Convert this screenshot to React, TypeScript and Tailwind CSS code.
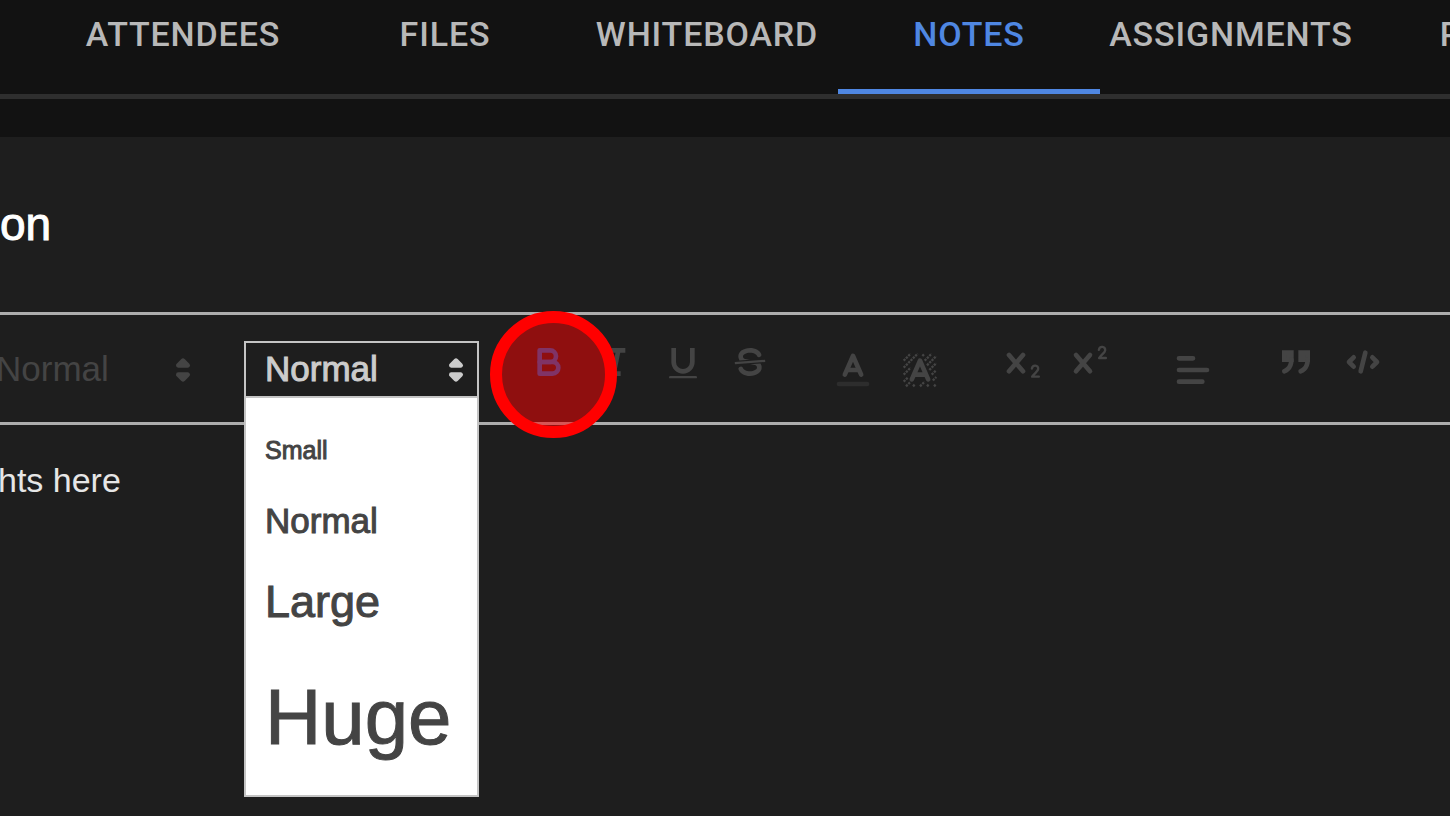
import { useState } from 'react';
import type { ReactNode } from 'react';

const TABS = ['Attendees', 'Files', 'Whiteboard', 'Notes', 'Assignments', 'Polls'];

const SIZES = [
  { label: 'Small', className: 'h-[58px] text-[25px]' },
  { label: 'Normal', className: 'h-[82px] text-[35px]' },
  { label: 'Large', className: 'h-[80px] text-[45px]' },
  { label: 'Huge', className: 'h-[151px] text-[78px]' },
];

function Icon({ children }: { children: ReactNode }) {
  return (
    <svg viewBox="0 0 18 18" className="h-[42px] w-[42px] fill-none stroke-current stroke-2">
      {children}
    </svg>
  );
}

function PickerArrows() {
  return (
    <svg viewBox="0 0 18 18" className="h-[42px] w-[42px] fill-current stroke-current stroke-2" strokeLinejoin="round">
      <polygon points="7 11 9 13 11 11 7 11" />
      <polygon points="7 7 9 5 11 7 7 7" />
    </svg>
  );
}

const ICONS: Record<string, ReactNode> = {
  Bold: (
    <Icon>
      <path strokeLinejoin="round" d="M5,4H9.5A2.5,2.5,0,0,1,12,6.5v0A2.5,2.5,0,0,1,9.5,9H5A0,0,0,0,1,5,9V4A0,0,0,0,1,5,4Z" />
      <path strokeLinejoin="round" d="M5,9h5.5A2.5,2.5,0,0,1,13,11.5v0A2.5,2.5,0,0,1,10.5,14H5a0,0,0,0,1,0,0V9A0,0,0,0,1,5,9Z" />
    </Icon>
  ),
  Italic: (
    <Icon>
      <path d="M7 4h6M5 14h6M8 14l2-10" />
    </Icon>
  ),
  Underline: (
    <Icon>
      <path d="M5,3V9a4.012,4.012,0,0,0,4,4H9a4.012,4.012,0,0,0,4-4V3" />
      <rect x="3" y="15" width="12" height="1" rx="0.5" className="fill-current stroke-none" />
    </Icon>
  ),
  Strike: (
    <Icon>
      <path className="stroke-1" d="M15.5 8.5l-13 1" />
      <path
        className="fill-current stroke-none"
        d="M9.007,8C6.542,7.791,6,7.519,6,6.5,6,5.792,7.283,5,9,5c1.571,0,2.765.679,2.969,1.309a1,1,0,0,0,1.9-.617C13.356,4.106,11.354,3,9,3,6.2,3,4,4.538,4,6.5a3.2,3.2,0,0,0,.5,1.843Z"
      />
      <path
        className="fill-current stroke-none"
        d="M8.984,10C11.457,10.208,12,10.479,12,11.5c0,0.708-1.283,1.5-3,1.5-1.571,0-2.765-.679-2.969-1.309a1,1,0,1,0-1.9.617C4.644,13.894,6.646,15,9,15c2.8,0,5-1.538,5-3.5a3.2,3.2,0,0,0-.5-1.843Z"
      />
    </Icon>
  ),
  'Text color': (
    <Icon>
      <path className="opacity-40" strokeLinecap="round" d="M3 15h12" />
      <path strokeLinecap="round" strokeLinejoin="round" d="M5.5 11L9 3l3.5 8M11.6 9H6.4" />
    </Icon>
  ),
  Background: (
    <Icon>
      <path
        strokeDasharray="1 .4"
        className="stroke-1"
        d="M2 5l3-3M2 8l6-6M2 11l3-3M10 3l1-1M2 14l2-2M11 5l3-3M3 16l2-2M12 7l4-4M6 16l1-1M13 9l3-3M9 16l2-2M14 11l2-2M12 16l1-1M14.500 13.500l1.500-1.500M15 16l1-1"
      />
      <path strokeLinecap="round" strokeLinejoin="round" d="M5.5 13L9 5l3.5 8M11.6 11H6.4" />
    </Icon>
  ),
  Subscript: (
    <Icon>
      <path strokeLinecap="round" d="M3 6l6 7M9 6l-6 7" />
      <path className="stroke-1" strokeLinecap="round" strokeLinejoin="round" d="M12.800 11.800c.3-1.800 2.900-1.600 2.700.2-.1 1.100-1.600 1.700-2.600 3.300h2.900" />
    </Icon>
  ),
  Superscript: (
    <Icon>
      <path strokeLinecap="round" d="M3 6l6 7M9 6l-6 7" />
      <path className="stroke-1" strokeLinecap="round" strokeLinejoin="round" d="M12.800 3.800c.3-1.800 2.900-1.600 2.700.2-.1 1.100-1.600 1.700-2.600 3.300h2.900" />
    </Icon>
  ),
  Align: (
    <Icon>
      <path strokeLinecap="round" d="M3 9h12M3 14h10M3 4h6" />
    </Icon>
  ),
  Blockquote: (
    <Icon>
      <path className="fill-current" d="M4 5h3v3H4zM11 5h3v3h-3z" />
      <path strokeLinecap="round" d="M7,8c0,4.031-3,5-3,5M14,8c0,4.031-3,5-3,5" />
    </Icon>
  ),
  'Code block': (
    <Icon>
      <path strokeLinecap="round" strokeLinejoin="round" d="M5 7L3 9l2 2M13 7l2 2-2 2M10 5l-2 8" />
    </Icon>
  ),
};

const GROUPS = [
  ['Bold', 'Italic', 'Underline', 'Strike'],
  ['Text color', 'Background'],
  ['Subscript', 'Superscript'],
  ['Align'],
  ['Blockquote', 'Code block'],
];

const LOW_ICONS = ['Text color', 'Background', 'Align'];

export default function App() {
  const [tab, setTab] = useState('Notes');
  const [size, setSize] = useState('Normal');
  const [open, setOpen] = useState(true);

  return (
    <div className="flex min-h-screen flex-col overflow-hidden bg-[#121212] font-['Liberation_Sans',Arial,sans-serif]">
      <nav className="flex h-[99px] shrink-0 overflow-hidden border-b-[5px] border-[#2e2e2e] pl-[52px] font-[Roboto,sans-serif]">
        {TABS.map((name) => (
          <button
            key={name}
            onClick={() => setTab(name)}
            className={`w-[262px] shrink-0 border-b-[5px] pb-5 text-[34px] font-medium uppercase tracking-wide ${
              tab === name ? 'border-[#4f87e2] text-[#4f87e2]' : 'border-transparent text-[#b8b8b8]'
            }`}
          >
            {name}
          </button>
        ))}
      </nav>

      <main className="mt-[38px] grow bg-[#1e1e1e]">
        <h1 className="flex h-[175px] items-center text-[46px] text-white [-webkit-text-stroke:1px]">on</h1>

        <div className="flex h-[113px] items-start border-y-[3px] border-[#adadad] pt-[26px] text-[#444444]">
          <button className="-ml-1 flex h-[57px] w-[208px] items-center justify-between text-[35px]">
            Normal
            <PickerArrows />
          </button>

          <div className="relative ml-10 w-[235px] shrink-0">
            <button
              onClick={() => setOpen(!open)}
              aria-expanded={open}
              className="flex h-[57px] w-full items-center justify-between border-2 border-[#c4c4c4] pl-[19px] text-[35px] text-[#cccccc] [-webkit-text-stroke:1px]"
            >
              {size}
              <PickerArrows />
            </button>
            {open && (
              <ul className="absolute top-[57px] left-0 z-10 w-full border-2 border-t-0 border-[#c4c4c4] bg-white pt-6 pb-0.5 text-[#444444] [-webkit-text-stroke:1px]">
                {SIZES.map((item) => (
                  <li key={item.label}>
                    <button
                      onClick={() => {
                        setSize(item.label);
                        setOpen(false);
                      }}
                      className={`flex w-full items-center pl-[19px] ${item.className}`}
                    >
                      {item.label}
                    </button>
                  </li>
                ))}
              </ul>
            )}
          </div>

          <div className="ml-9 flex gap-9">
            {GROUPS.map((group) => (
              <div key={group[0]} className="flex">
                {group.map((name) => (
                  <div key={name} className="relative">
                    <button
                      aria-label={name}
                      className={`flex h-[56px] w-[67px] justify-center ${
                        LOW_ICONS.includes(name) ? 'pt-2' : ''
                      } ${name === 'Bold' ? 'text-[#0066cc]' : ''}`}
                    >
                      {ICONS[name]}
                    </button>
                    {name === 'Bold' && (
                      <span className="pointer-events-none absolute -top-[30px] -left-[25px] z-20 h-[127px] w-[127px] rounded-full border-[12px] border-[#ff0000] bg-[#ff0000]/50" />
                    )}
                  </div>
                ))}
              </div>
            ))}
          </div>
        </div>

        <p className="-ml-0.5 pt-[35px] text-[34px] leading-10 text-[#e6e6e6]">hts here</p>
      </main>
    </div>
  );
}
